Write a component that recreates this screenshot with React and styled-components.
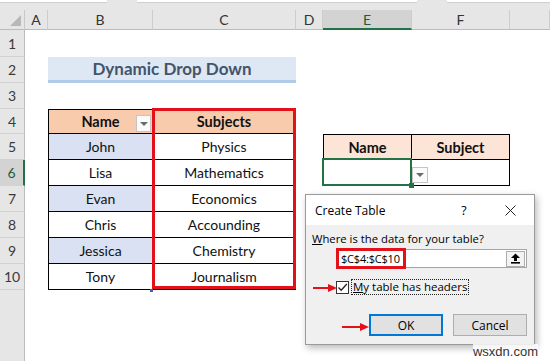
import React from "react";
import styled, { createGlobalStyle, css } from "styled-components";

const GlobalStyle = createGlobalStyle`
  html, body { margin: 0; padding: 0; background: #fff; }
  body { width: 550px; height: 361px; overflow: hidden; font-family: "Lato", "Liberation Sans", sans-serif; }
`;

const Frame = styled.div`
  position: relative;
  width: 550px;
  height: 361px;
  overflow: hidden;
  background: #fff;
`;

// strip under the formula bar
const TopStrip = styled.div`
  height: 10px;
  background: #e6e6e6;
  display: flex;
  gap: 30px;
`;

const BarEdge = styled.div`
  width: ${(p) => p.$w}px;
  height: 2px;
  background: #fff;
  border-bottom: 1px solid #cfcfcf;
`;

const Sheet = styled.div`
  display: grid;
  grid-template-columns: 25px 23px 105px 143px 27px 89px 98px 1fr;
  grid-template-rows: 20px 27px 26px 26px 25px repeat(6, 26px) 1fr;
  height: 351px;
`;

const Corner = styled.div`
  grid-column: 1;
  grid-row: 1;
  background: #e6e6e6;
  border-right: 1px solid #c8c8c8;
  border-bottom: 1px solid #bcbcbc;
  position: relative;
  &::after {
    content: "";
    position: absolute;
    right: 3px;
    bottom: 3px;
    border-left: 11px solid transparent;
    border-bottom: 11px solid #b8b8b8;
  }
`;

const ColHead = styled.div`
  grid-row: 1;
  grid-column: ${(p) => p.$col};
  background: #e6e6e6;
  border-right: 1px solid #cdcdcd;
  border-bottom: 1px solid #bcbcbc;
  display: flex;
  align-items: center;
  justify-content: center;
  font-size: 14px;
  color: #333;
  ${(p) =>
    p.$active &&
    css`
      background: #d3d3d3;
      border-bottom: 2px solid #217346;
      color: #1f5b39;
    `}
`;

const RowHead = styled.div`
  grid-column: 1;
  grid-row: ${(p) => p.$row};
  background: #e6e6e6;
  border-right: 1px solid #bcbcbc;
  border-bottom: ${(p) => (p.$last ? "none" : "1px solid #d2d2d2")};
  display: flex;
  align-items: center;
  justify-content: center;
  font-size: 14px;
  color: #3a3a3a;
  ${(p) =>
    p.$active &&
    css`
      background: #d3d3d3;
      border-right: 2px solid #217346;
      color: #1f5b39;
    `}
`;

const Title = styled.div`
  grid-column: 3 / 5;
  grid-row: 3;
  background: #dde8f4;
  border-bottom: 3px solid #b2cbe8;
  display: flex;
  align-items: center;
  justify-content: center;
  font-weight: 700;
  font-size: 17px;
  color: #44546a;
`;

const DataTable = styled.div`
  grid-column: ${(p) => p.$cols};
  grid-row: ${(p) => p.$rows};
  position: relative;
  display: grid;
  grid-template-columns: ${(p) => p.$template};
  grid-template-rows: ${(p) => p.$rowTemplate};
  border-left: 1px solid #000;
  border-top: 1px solid #000;
`;

const Cell = styled.div`
  position: relative;
  border-right: 1px solid #000;
  border-bottom: 1px solid #000;
  display: flex;
  align-items: center;
  justify-content: center;
  font-size: 14px;
  color: #111;
  background: ${(p) => p.$bg || "#fff"};
  ${(p) =>
    p.$head &&
    css`
      font-weight: 700;
      font-size: 14.5px;
    `}
`;

const DropButton = styled.span`
  position: absolute;
  box-sizing: border-box;
  border: 1px solid #c4c4c4;
  background: #fafafa;
  display: flex;
  align-items: center;
  justify-content: center;
  z-index: 3;
  ${(p) =>
    p.$side
      ? css`
          left: calc(100% + 1px);
          top: 7px;
          height: 16px;
          width: 16px;
        `
      : css`
          right: 1px;
          top: 5px;
          width: 15px;
          height: 17px;
        `}
  &::after {
    content: "";
    border-left: 4px solid transparent;
    border-right: 4px solid transparent;
    border-top: 4px solid #6a6a6a;
  }
`;

const RedFrame = styled.div`
  position: absolute;
  left: 103px;
  top: -2px;
  width: 144px;
  height: 181px;
  box-sizing: border-box;
  border: 3px solid #e3111a;
  pointer-events: none;
`;

const ResizeMark = styled.span`
  position: absolute;
  left: 101px;
  bottom: -2px;
  width: 3px;
  height: 3px;
  background: #3f62b6;
`;

const SelectedCell = styled(Cell)`
  &::after {
    content: "";
    position: absolute;
    inset: -2px -1px -1px -2px;
    border: 2px solid #217346;
  }
  &::before {
    content: "";
    position: absolute;
    right: -3px;
    bottom: -3px;
    width: 5px;
    height: 5px;
    background: #217346;
    z-index: 2;
  }
`;

/* ---------- dialog ---------- */

const Dialog = styled.div`
  position: absolute;
  left: 305px;
  top: 194px;
  width: 230px;
  height: 151px;
  box-sizing: border-box;
  border: 1px solid #9a9a9a;
  background: #f0f0f0;
  box-shadow: 2px 3px 7px rgba(0, 0, 0, 0.28);
  display: flex;
  flex-direction: column;
  font-family: "Open Sans", "Noto Sans", sans-serif;
  font-size: 11.3px;
  color: #000;
`;

const TitleBar = styled.div`
  height: 30px;
  background: #fff;
  display: flex;
  align-items: center;
  padding: 0 18px 0 9px;
  font-size: 12px;
`;

const TitleText = styled.span`
  flex: 1;
`;

const HelpMark = styled.span`
  width: 20px;
  margin-right: 31px;
  text-align: center;
  font-size: 12.5px;
`;

const Body = styled.div`
  flex: 1;
  display: flex;
  flex-direction: column;
  padding: 6px 7px 0 6px;
`;

const Prompt = styled.div`
  line-height: 15px;
`;

const Key = styled.span`
  text-decoration: underline;
`;

const RangeInput = styled.div`
  margin: 3px 0 0 24px;
  height: 19px;
  box-sizing: border-box;
  border: 1px solid #a5a5a5;
  background: #fff;
  display: flex;
  align-items: center;
  justify-content: space-between;
  position: relative;
`;

const RangeValue = styled.span`
  margin: -1px 0 -1px -1px;
  height: 21px;
  width: 70px;
  box-sizing: border-box;
  border: 3px solid #e3111a;
  display: flex;
  align-items: center;
  padding-left: 2px;
  font-size: 11px;
  letter-spacing: -0.2px;
  white-space: nowrap;
`;

const PickButton = styled.span`
  width: 19px;
  height: 16px;
  margin-right: 1px;
  box-sizing: border-box;
  border: 1px solid #adadad;
  background: #f3f3f3;
  display: flex;
  align-items: center;
  justify-content: center;
`;

const CheckRow = styled.div`
  margin: 11px 0 0 24px;
  display: flex;
  align-items: center;
  gap: 2px;
`;

const CheckBox = styled.span`
  width: 13px;
  height: 13px;
  box-sizing: border-box;
  border: 1px solid #333;
  background: #fff;
  display: flex;
  align-items: center;
  justify-content: center;
`;

const FocusLabel = styled.span`
  border: 1px dotted #222;
  padding: 0 1px;
  line-height: 14px;
  font-size: 11.5px;
`;

const Buttons = styled.div`
  margin-top: 19px;
  display: flex;
  justify-content: flex-end;
  gap: 10px;
`;

const Button = styled.button`
  width: 74px;
  height: 22px;
  box-sizing: border-box;
  background: #e1e1e1;
  border: 1px solid #adadad;
  font-family: inherit;
  font-size: 12px;
  color: #000;
  padding: 0;
  ${(p) =>
    p.$primary &&
    css`
      border: 2px solid #0078d7;
    `}
`;

const Pointer = styled.svg`
  position: absolute;
  left: ${(p) => p.$x}px;
  top: ${(p) => p.$y}px;
`;

const Watermark = styled.div`
  position: absolute;
  right: 12px;
  bottom: 2px;
  font-family: "Liberation Sans", Arial, sans-serif;
  font-size: 13px;
  color: #333;
  background: rgba(255, 255, 255, 0.8);
`;

const RedArrow = ({ x, y, w }) => (
  <Pointer $x={x} $y={y} width={w} height="8" viewBox={`0 0 ${w} 8`}>
    <line x1="0" y1="4" x2={w - 7} y2="4" stroke="#e3111a" strokeWidth="2" />
    <polygon points={`${w - 9},0 ${w},4 ${w - 9},8`} fill="#e3111a" />
  </Pointer>
);

const names = ["John", "Lisa", "Evan", "Chris", "Jessica", "Tony"];
const subjects = ["Physics", "Mathematics", "Economics", "Accounding", "Chemistry", "Journalism"];
const columns = ["A", "B", "C", "D", "E", "F", ""];

export default function App() {
  return (
    <Frame>
      <GlobalStyle />
      <TopStrip>
        <BarEdge $w={107} />
        <BarEdge $w={280} />
        <BarEdge $w={103} />
      </TopStrip>
      <Sheet>
        <Corner />
        {columns.map((c, i) => (
          <ColHead key={i} $col={i + 2} $active={c === "E"}>
            {c}
          </ColHead>
        ))}
        {Array.from({ length: 10 }, (_, i) => (
          <RowHead key={i} $row={i + 2} $active={i + 1 === 6}>
            {i + 1}
          </RowHead>
        ))}
        <RowHead $row={12} $last />

        <Title>Dynamic Drop Down</Title>

        <DataTable $cols="3 / 5" $rows="5 / 12" $template="1fr 143px" $rowTemplate="1fr repeat(6, 26px)">
          <Cell $head $bg="#f8cbad">
            Name
            <DropButton />
          </Cell>
          <Cell $head $bg="#f8cbad">Subjects</Cell>
          {names.map((n, i) => (
            <React.Fragment key={n}>
              <Cell $bg={i % 2 === 0 ? "#d9e1f2" : "#fff"}>{n}</Cell>
              <Cell>{subjects[i]}</Cell>
            </React.Fragment>
          ))}
          <RedFrame />
          <ResizeMark />
        </DataTable>

        <DataTable $cols="6 / 8" $rows="6 / 8" $template="88px 1fr" $rowTemplate="1fr 26px">
          <Cell $head $bg="#fce4d6">Name</Cell>
          <Cell $head $bg="#fce4d6">Subject</Cell>
          <SelectedCell>
            <DropButton $side />
          </SelectedCell>
          <Cell />
        </DataTable>
      </Sheet>

      <Dialog>
        <TitleBar>
          <TitleText>Create Table</TitleText>
          <HelpMark>?</HelpMark>
          <svg width="11" height="11" viewBox="0 0 11 11">
            <path d="M0.5 0.5 L10.5 10.5 M10.5 0.5 L0.5 10.5" stroke="#222" strokeWidth="1" />
          </svg>
        </TitleBar>
        <Body>
          <Prompt>
            <Key>W</Key>here is the data for your table?
          </Prompt>
          <RangeInput>
            <RangeValue>$C$4:$C$10</RangeValue>
            <PickButton>
              <svg width="11" height="11" viewBox="0 0 11 11">
                <polygon points="5.5,0.5 10,5 7,5 7,8 4,8 4,5 1,5" fill="#000" />
                <rect x="1" y="9" width="9" height="1.6" fill="#000" />
              </svg>
            </PickButton>
          </RangeInput>
          <CheckRow>
            <CheckBox>
              <svg width="11" height="11" viewBox="0 0 11 11">
                <polyline points="1.5,5.5 4.2,8.3 9.8,2" fill="none" stroke="#222" strokeWidth="1.3" />
              </svg>
            </CheckBox>
            <FocusLabel>
              <Key>M</Key>y table has headers
            </FocusLabel>
          </CheckRow>
          <Buttons>
            <Button $primary>OK</Button>
            <Button>Cancel</Button>
          </Buttons>
        </Body>
        <RedArrow x={7} y={89} w={24} />
        <RedArrow x={36} y={128} w={27} />
      </Dialog>
      <Watermark>wsxdn.com</Watermark>
    </Frame>
  );
}
